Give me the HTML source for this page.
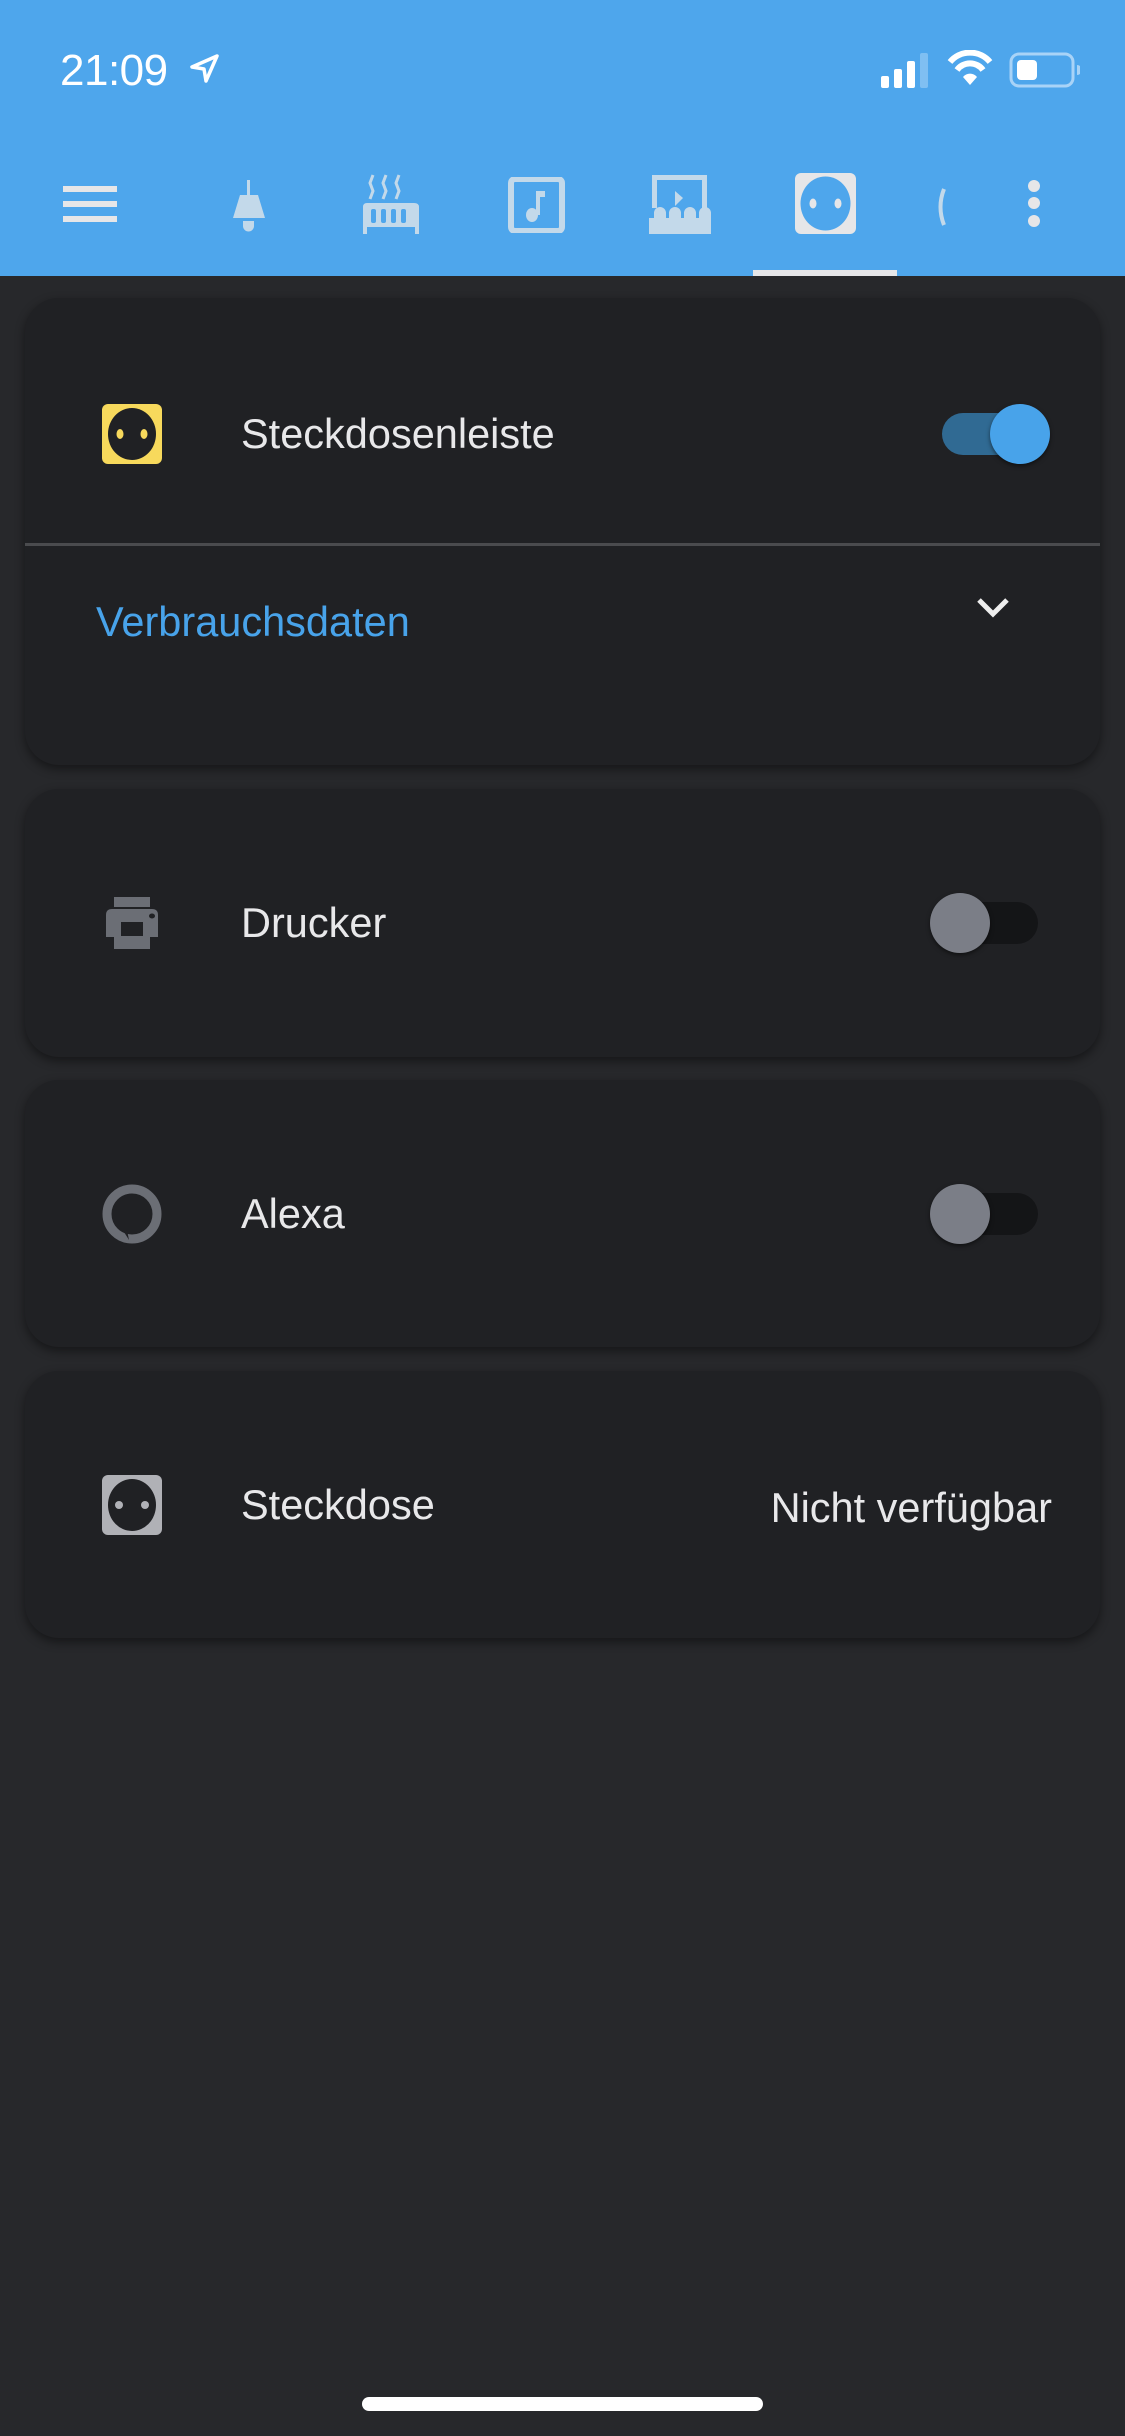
<!DOCTYPE html>
<html><head><meta charset="utf-8"><style>
*{margin:0;padding:0;box-sizing:border-box}
body{width:1125px;height:2436px;background:#27282b;font-family:"Liberation Sans",sans-serif;position:relative;overflow:hidden}
.hdr{position:absolute;left:0;top:0;width:1125px;height:276px;background:#4ea6ec}
.abs{position:absolute}
.card{position:absolute;left:25px;width:1075px;background:#202124;border-radius:34px;box-shadow:0 4px 10px rgba(0,0,0,.45)}
.lbl{position:absolute;left:241px;color:#e8e8ea;font-size:41.5px;line-height:1}
.ico{position:absolute;left:102px;width:60px;height:60px}
.track{position:absolute;height:42px;border-radius:21px}
.knob{position:absolute;width:60px;height:60px;border-radius:50%;box-shadow:0 2px 4px rgba(0,0,0,.5)}
</style></head><body>
<div class="hdr"></div>
<div class="abs" style="left:60px;top:46px;color:#fff;font-size:44px;letter-spacing:-0.5px">21:09</div>
<svg class="abs" style="left:189px;top:53px" width="32" height="32" viewBox="0 0 32 32"><path d="M28 3 L3 14 L15 16 L17 28 Z" fill="none" stroke="#fff" stroke-width="3.5" stroke-linejoin="round"/></svg>
<svg class="abs" style="left:880px;top:50px" width="200" height="40" viewBox="0 0 200 40">
<rect x="1" y="26" width="8" height="12" rx="2" fill="#fff"/><rect x="14" y="19" width="8" height="19" rx="2" fill="#fff"/><rect x="27" y="11" width="8" height="27" rx="2" fill="#fff"/><rect x="40" y="3" width="8" height="35" rx="2" fill="#7fbff2"/>
<path d="M70 12 A26 26 0 0 1 110 12" fill="none" stroke="#fff" stroke-width="6"/><path d="M77 20 A16 16 0 0 1 103 20" fill="none" stroke="#fff" stroke-width="6"/><path d="M83 27 L90 35 L97 27 A9 9 0 0 0 83 27Z" fill="#fff"/>
<rect x="131" y="4" width="62" height="32" rx="8" fill="none" stroke="#a8d3f7" stroke-width="3"/><rect x="137" y="10" width="20" height="20" rx="4" fill="#fff"/><path d="M197 15 a5 5 0 0 1 0 10Z" fill="#a8d3f7"/>
</svg>
<div class="abs" style="left:63px;top:186px;width:54px;height:6px;background:#e6e6e8"></div>
<div class="abs" style="left:63px;top:201px;width:54px;height:6px;background:#e6e6e8"></div>
<div class="abs" style="left:63px;top:216px;width:54px;height:6px;background:#e6e6e8"></div>
<svg class="abs" style="left:220px;top:178px" width="60" height="56" viewBox="0 0 60 56"><rect x="27" y="2" width="3" height="16" fill="#c3d9ea"/><path d="M20 17 H38 L45 40 H13 Z" fill="#c3d9ea"/><path d="M23 43 H34 V48 A5 5 0 0 1 23 48Z" fill="#c3d9ea"/></svg>
<svg class="abs" style="left:360px;top:173px" width="66" height="62" viewBox="0 0 66 62"><path d="M13 2 l-3 8 l3 8 l-3 8 M26 2 l-3 8 l3 8 l-3 8 M39 2 l-3 8 l3 8 l-3 8" fill="none" stroke="#c3d9ea" stroke-width="3"/><path d="M3 34 Q3 30 7 30 H54 Q59 30 59 34 V61 H55 V54 H7 V61 H3 Z" fill="#c3d9ea"/><rect x="11" y="36" width="5" height="14" rx="2" fill="#4ea6ec"/><rect x="21" y="36" width="5" height="14" rx="2" fill="#4ea6ec"/><rect x="31" y="36" width="5" height="14" rx="2" fill="#4ea6ec"/><rect x="41" y="36" width="5" height="14" rx="2" fill="#4ea6ec"/></svg>
<svg class="abs" style="left:508px;top:177px" width="58" height="56" viewBox="0 0 58 56"><rect x="3" y="2" width="51" height="52" rx="4" fill="none" stroke="#c3d9ea" stroke-width="6"/><rect x="28" y="14" width="4" height="24" fill="#c3d9ea"/><rect x="28" y="14" width="9" height="6" fill="#c3d9ea"/><ellipse cx="24" cy="38" rx="6" ry="7" fill="#c3d9ea"/></svg>
<svg class="abs" style="left:647px;top:173px" width="66" height="62" viewBox="0 0 66 62"><path d="M5 2 H60 V35 H55 V7 H10 V35 H5Z" fill="#c3d9ea"/><path d="M28 18 L36 25 L28 33Z" fill="#c3d9ea"/><path d="M2 61 V45 H7 V40 a6 6 0 0 1 12 0 V45 H22 V40 a6 6 0 0 1 12 0 V45 H37 V40 a6 6 0 0 1 12 0 V45 H52 V40 a6 6 0 0 1 12 0 V61Z" fill="#c3d9ea"/></svg>
<svg class="abs" style="left:795px;top:173px" width="61" height="61" viewBox="0 0 61 61"><rect x="0" y="0" width="61" height="61" rx="6" fill="#e6e6e8"/><ellipse cx="30.5" cy="30.5" rx="25" ry="27" fill="#4ea6ec"/><ellipse cx="18" cy="30.5" rx="3.5" ry="5" fill="#e6e6e8"/><ellipse cx="43" cy="30.5" rx="3.5" ry="5" fill="#e6e6e8"/></svg>
<svg class="abs" style="left:936px;top:187px" width="12" height="40" viewBox="0 0 12 40"><path d="M8 2 Q1 20 8 38" fill="none" stroke="#c3d9ea" stroke-width="4"/></svg>
<div class="abs" style="left:1028px;top:180px;width:12px;height:12px;border-radius:50%;background:#e6e6e8"></div>
<div class="abs" style="left:1028px;top:197px;width:12px;height:12px;border-radius:50%;background:#e6e6e8"></div>
<div class="abs" style="left:1028px;top:215px;width:12px;height:12px;border-radius:50%;background:#e6e6e8"></div>
<div class="abs" style="left:753px;top:270px;width:144px;height:6px;background:#e6e6e8"></div>

<div class="card" style="top:298px;height:467px"></div>
<svg class="ico" style="top:404px" viewBox="0 0 60 60"><rect width="60" height="60" rx="6" fill="#f7d95c"/><ellipse cx="30" cy="30" rx="24" ry="26" fill="#202124"/><ellipse cx="18" cy="30" rx="3.5" ry="5" fill="#f7d95c"/><ellipse cx="42" cy="30" rx="3.5" ry="5" fill="#f7d95c"/></svg>
<div class="lbl" style="top:413px">Steckdosenleiste</div>
<div class="track" style="left:942px;top:413px;width:90px;background:#306a93"></div>
<div class="knob" style="left:990px;top:404px;background:#48a3ea"></div>
<div class="abs" style="left:25px;top:543px;width:1075px;height:3px;background:#4a4b4e"></div>
<div class="abs" style="left:96px;top:598px;color:#48a3ea;font-size:41.5px">Verbrauchsdaten</div>
<svg class="abs" style="left:975px;top:595px" width="36" height="26" viewBox="0 0 36 26"><path d="M4 5 L18 19 L32 5" fill="none" stroke="#eee" stroke-width="5"/></svg>

<div class="card" style="top:789px;height:268px"></div>
<svg class="ico" style="top:893px" viewBox="0 0 60 60"><rect x="12" y="4" width="36" height="10" fill="#6b6e75"/><path d="M4 22 Q4 16 10 16 H50 Q56 16 56 22 V44 H48 V56 H12 V44 H4Z" fill="#6b6e75"/><rect x="19" y="29" width="22" height="14" fill="#202124"/><ellipse cx="50" cy="23" rx="3" ry="2.5" fill="#202124"/></svg>
<div class="lbl" style="top:902px">Drucker</div>
<div class="track" style="left:955px;top:902px;width:83px;background:#141517"></div>
<div class="knob" style="left:930px;top:893px;background:#7b7e87"></div>

<div class="card" style="top:1080px;height:267px"></div>
<svg class="ico" style="top:1184px" viewBox="0 0 60 60"><path d="M27 56 A26 26 0 1 1 33 56 Z M27 46 V50 A21 21 0 1 0 33 50 Z" fill="none"/><circle cx="30" cy="30" r="25" fill="none" stroke="#6b6e75" stroke-width="9"/><path d="M22 48 L27 56 L25 46Z" fill="#202124"/></svg>
<div class="lbl" style="top:1193px">Alexa</div>
<div class="track" style="left:955px;top:1193px;width:83px;background:#141517"></div>
<div class="knob" style="left:930px;top:1184px;background:#7b7e87"></div>

<div class="card" style="top:1371px;height:267px"></div>
<svg class="ico" style="top:1475px" viewBox="0 0 60 60"><rect width="60" height="60" rx="6" fill="#b0b1b6"/><ellipse cx="30" cy="30" rx="24" ry="26" fill="#202124"/><ellipse cx="17" cy="30" rx="4" ry="4" fill="#b0b1b6"/><ellipse cx="43" cy="30" rx="4" ry="4" fill="#b0b1b6"/></svg>
<div class="lbl" style="top:1484px">Steckdose</div>
<div class="abs" style="right:73px;top:1484px;color:#e8e8ea;font-size:41.5px">Nicht verfügbar</div>

<div class="abs" style="left:362px;top:2397px;width:401px;height:14px;border-radius:7px;background:#fff"></div>
</body></html>
